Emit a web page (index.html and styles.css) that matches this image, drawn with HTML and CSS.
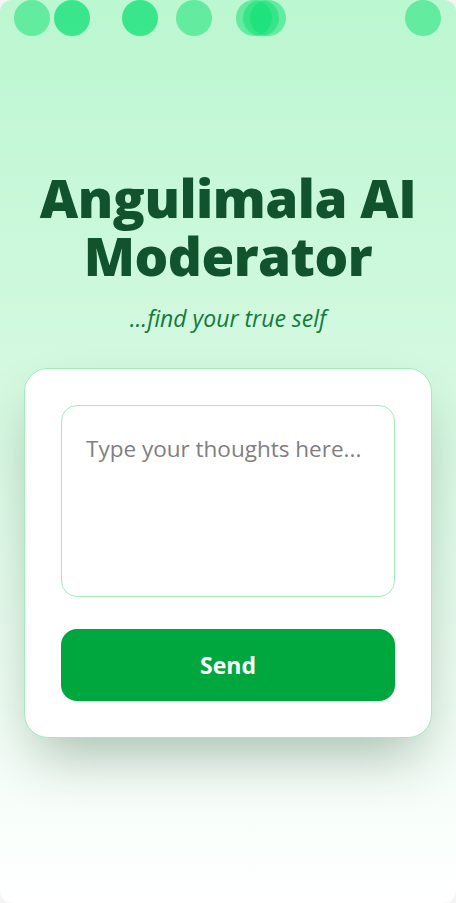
FILE: index.html
```html
<!DOCTYPE html>
<html lang="en">
<head>
<meta charset="utf-8">
<title>Angulimala AI Moderator</title>
<link rel="stylesheet" href="styles.css">
</head>
<body>
<div class="page">
  <div class="bubbles" aria-hidden="true">
    <span class="bubble light" style="left:14px"></span>
    <span class="bubble dark" style="left:54px"></span>
    <span class="bubble dark" style="left:122px"></span>
    <span class="bubble light" style="left:176px"></span>
    <span class="bubble light" style="left:236px"></span>
    <span class="bubble light" style="left:243px"></span>
    <span class="bubble light" style="left:250px"></span>
    <span class="bubble light" style="left:405px"></span>
  </div>
  <main class="content">
    <h1 class="title">Angulimala AI Moderator</h1>
    <p class="tagline">...find your true self</p>
    <form class="card">
      <textarea class="thoughts" placeholder="Type your thoughts here..."></textarea>
      <button type="button" class="send">Send</button>
    </form>
  </main>
</div>
</body>
</html>
```
FILE: styles.css
```css
* { box-sizing: border-box; }
html, body { margin: 0; padding: 0; background: #f4f4f4; }
body { font-family: "Open Sans", "Noto Sans", sans-serif; }
.page {
  position: relative;
  height: 903px;
  border-radius: 12px;
  overflow: hidden;
  background: linear-gradient(to bottom, #bbf7d0 0%, #d6f9e2 45%, #ffffff 100%);
}
.bubbles { position: absolute; inset: 0; pointer-events: none; }
.bubble {
  position: absolute;
  top: 0;
  width: 36px;
  height: 36px;
  border-radius: 50%;
  background: rgb(9, 223, 112);
}
.bubble.light { opacity: 0.5; }
.bubble.dark { opacity: 0.72; }
.content {
  min-height: 903px;
  display: flex;
  flex-direction: column;
  align-items: center;
  justify-content: center;
  padding: 4px 24px 0;
}
.title {
  margin: 0;
  font-size: 53px;
  line-height: 58px;
  font-weight: 800;
  color: #11532c;
  text-align: center;
  letter-spacing: -0.5px;
}
.tagline {
  margin: 17px 0 34px;
  font-size: 23px;
  line-height: 32px;
  font-style: italic;
  color: #137a3a;
}
.card {
  width: 100%;
  background: #fff;
  border: 1px solid #a3ebbd;
  border-radius: 24px;
  padding: 36px;
  display: flex;
  flex-direction: column;
  gap: 32px;
  box-shadow: 0 28px 56px -12px rgba(0, 40, 10, 0.3);
}
.thoughts {
  display: block;
  width: 100%;
  height: 192px;
  resize: none;
  border: 1px solid #a3ebbd;
  border-radius: 16px;
  padding: 27px 24px 24px;
  font-family: "Open Sans", "Noto Sans", sans-serif;
  font-size: 22.5px;
  line-height: 32px;
  color: #333;
  outline: none;
}
.thoughts::placeholder { color: #7f7f7f; }
.send {
  display: block;
  width: 100%;
  height: 72px;
  border: 0;
  border-radius: 16px;
  background: #00a63e;
  color: #fff;
  font-family: "Open Sans", "Noto Sans", sans-serif;
  font-weight: 700;
  font-size: 23px;
  cursor: pointer;
}
```
